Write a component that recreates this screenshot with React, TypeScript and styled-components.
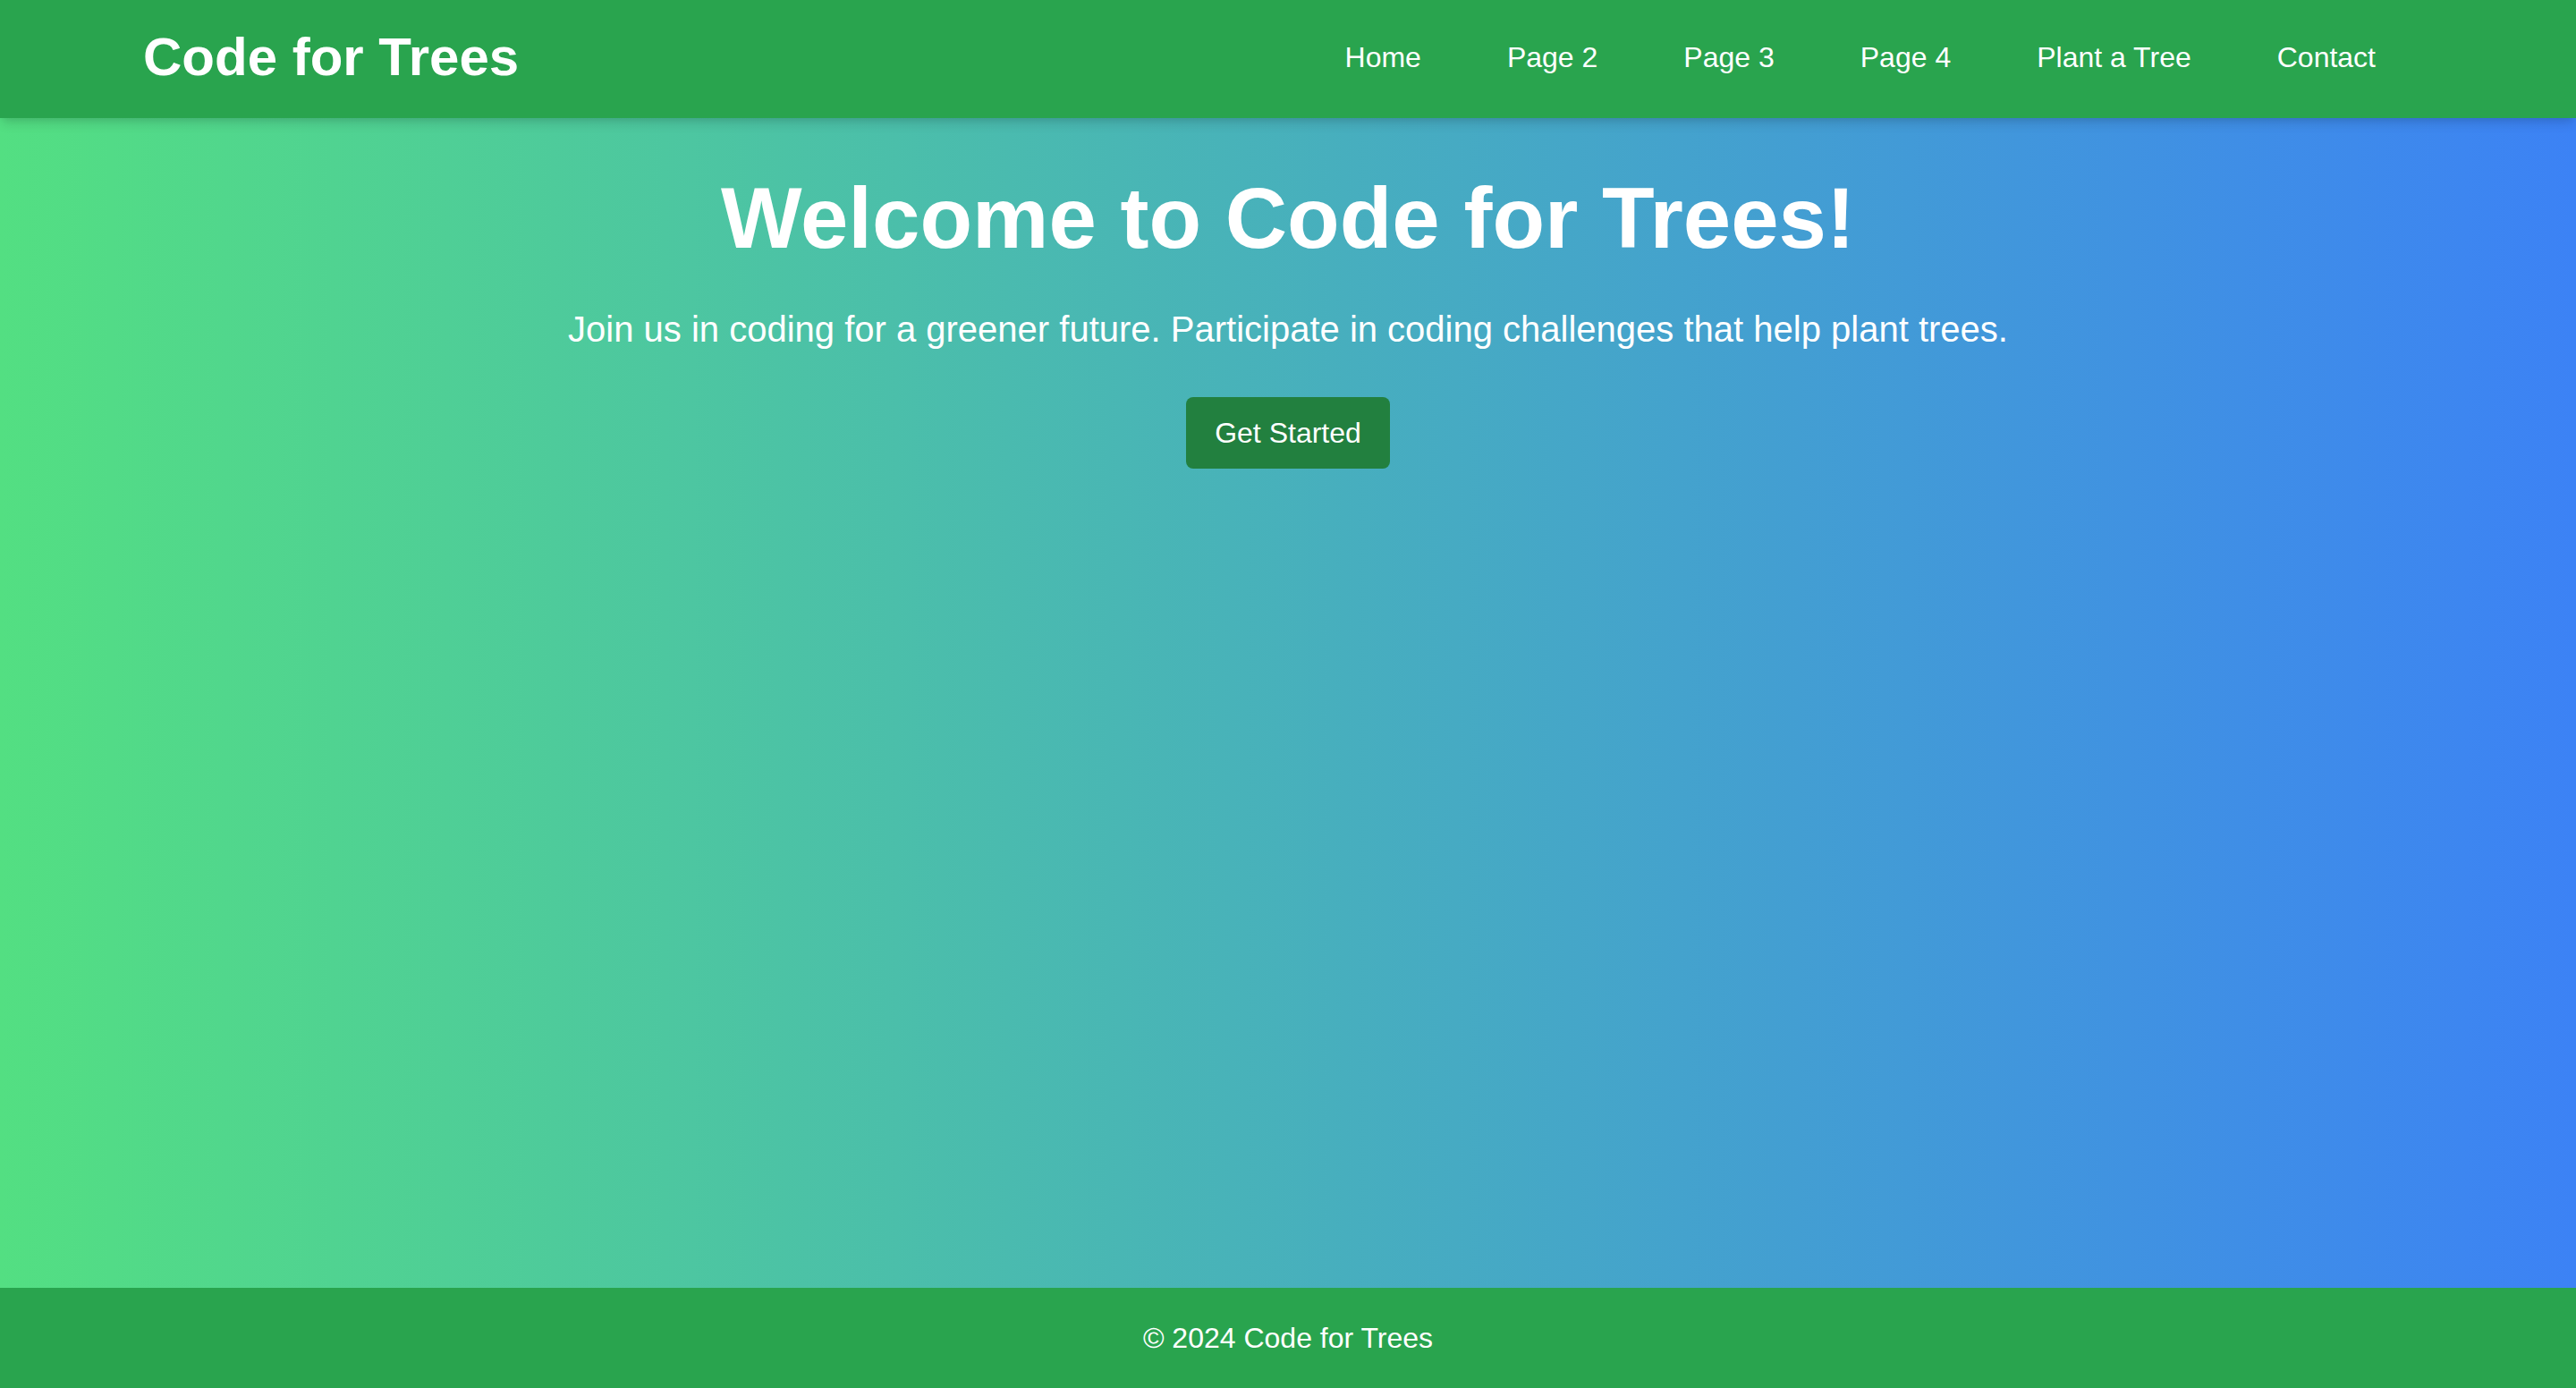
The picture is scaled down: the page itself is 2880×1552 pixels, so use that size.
import React from "react";
import styled, { createGlobalStyle } from "styled-components";

const GlobalStyle = createGlobalStyle`
  html, body {
    margin: 0;
    padding: 0;
  }
  body {
    font-family: "Liberation Sans", Arial, Helvetica, sans-serif;
    color: #ffffff;
  }
  * { box-sizing: border-box; }
`;

const Page = styled.div`
  min-height: 100vh;
  display: flex;
  flex-direction: column;
  background: linear-gradient(to right, #53df82, #3c82f5);
`;

const Header = styled.header`
  position: relative;
  z-index: 1;
  background: #29a44e;
  padding: 28px 0 32px;
  box-shadow: 0 8px 12px -2px rgba(0, 0, 0, 0.12), 0 4px 8px -4px rgba(0, 0, 0, 0.1);
`;

const HeaderInner = styled.div`
  width: 2560px;
  height: 72px;
  margin: 0 auto;
  display: flex;
  align-items: center;
  justify-content: space-between;
`;

const Logo = styled.h1`
  margin: 0;
  font-size: 60px;
  line-height: 72px;
  font-weight: 700;
`;

const Nav = styled.nav`
  display: flex;
  align-items: center;
  gap: 96px;
  margin-right: 64px;
`;

const NavLink = styled.a`
  color: #ffffff;
  text-decoration: none;
  font-size: 32px;
  line-height: 48px;
`;

const Main = styled.main`
  flex: 1;
  padding-top: 64px;
  text-align: center;
`;

const Title = styled.h2`
  margin: 0 0 48px;
  font-size: 96px;
  line-height: 1;
  font-weight: 700;
`;

const Lead = styled.p`
  margin: 0 0 48px;
  font-size: 40px;
  line-height: 56px;
`;

const Button = styled.a`
  display: inline-block;
  background: #22803f;
  color: #ffffff;
  text-decoration: none;
  font-size: 32px;
  line-height: 48px;
  padding: 16px 32px;
  border-radius: 8px;
`;

const Footer = styled.footer`
  background: #29a44e;
  padding: 32px 0;
  text-align: center;
  font-size: 32px;
  line-height: 48px;
`;

const links = ["Home", "Page 2", "Page 3", "Page 4", "Plant a Tree", "Contact"];

export default function App() {
  return (
    <>
      <GlobalStyle />
      <Page>
        <Header>
          <HeaderInner>
            <Logo>Code for Trees</Logo>
            <Nav>
              {links.map((l) => (
                <NavLink key={l} href="#">
                  {l}
                </NavLink>
              ))}
            </Nav>
          </HeaderInner>
        </Header>
        <Main>
          <Title>Welcome to Code for Trees!</Title>
          <Lead>
            Join us in coding for a greener future. Participate in coding challenges that help plant trees.
          </Lead>
          <Button href="#">Get Started</Button>
        </Main>
        <Footer>© 2024 Code for Trees</Footer>
      </Page>
    </>
  );
}
